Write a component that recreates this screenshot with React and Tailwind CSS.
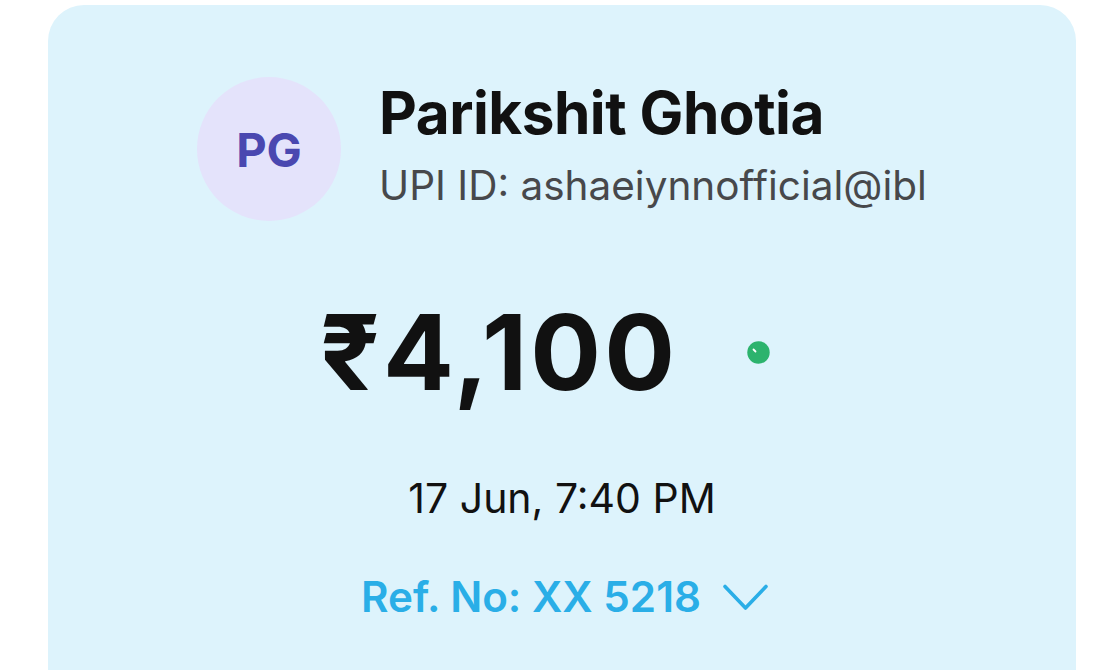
const App = () => {
    return (
        <div className="bg-white pt-[5px] pl-[48px] pr-[29px] overflow-hidden h-[670px]">
            <div
                className="bg-[#ddf3fc] rounded-t-[36px] h-[700px] pt-[72px]"
                style={{ fontFamily: "Inter, 'Noto Sans', sans-serif" }}
            >
                {/* Header: avatar + name */}
                <div className="flex items-center gap-[38px] pl-[149px]">
                    <div className="w-[144px] h-[144px] rounded-full bg-[#e4e3fb] flex items-center justify-center shrink-0">
                        <span className="text-[47px] leading-none font-bold text-[#4a48b0]">PG</span>
                    </div>
                    <div className="-mt-[8px]">
                        <h1 className="text-[58.5px] leading-[64px] font-bold text-[#111111] tracking-[-0.5px]">Parikshit Ghotia</h1>
                        <p className="text-[40.5px] leading-[46px] text-[#47484b] mt-[18px]">UPI ID: ashaeiynnofficial@ibl</p>
                    </div>
                </div>

                {/* Amount */}
                <div className="mt-[78px] flex items-center justify-center pr-[34px]">
                    <span className="text-[105px] leading-none font-bold text-[#111111] tracking-[3px]">₹4,100</span>
                    <svg className="ml-[69px] mt-[2px]" width="23" height="23" viewBox="0 0 23 23">
                        <circle cx="11.5" cy="11.5" r="11.2" fill="#2cb36d" />
                        <path d="M6.5 8.5 L8.5 10.5" stroke="#ffffff" strokeWidth="1.8" strokeLinecap="round" />
                    </svg>
                </div>

                {/* Date */}
                <div className="mt-[74px] text-center text-[41px] leading-none text-[#111111]">
                    17 Jun, 7:40 PM
                </div>

                {/* Ref no */}
                <div className="mt-[57px] pl-[5px] flex items-center justify-center gap-[22px] text-[#2aaee7]">
                    <span className="text-[42.2px] leading-none font-semibold">Ref. No: XX 5218</span>
                    <svg width="45" height="27" viewBox="0 0 45 27" fill="none">
                        <path d="M2 2.5 L22.5 24 L43 2.5" stroke="#2aaee7" strokeWidth="3.6" strokeLinecap="round" strokeLinejoin="round" />
                    </svg>
                </div>
            </div>
        </div>
    );
};

export default App;
